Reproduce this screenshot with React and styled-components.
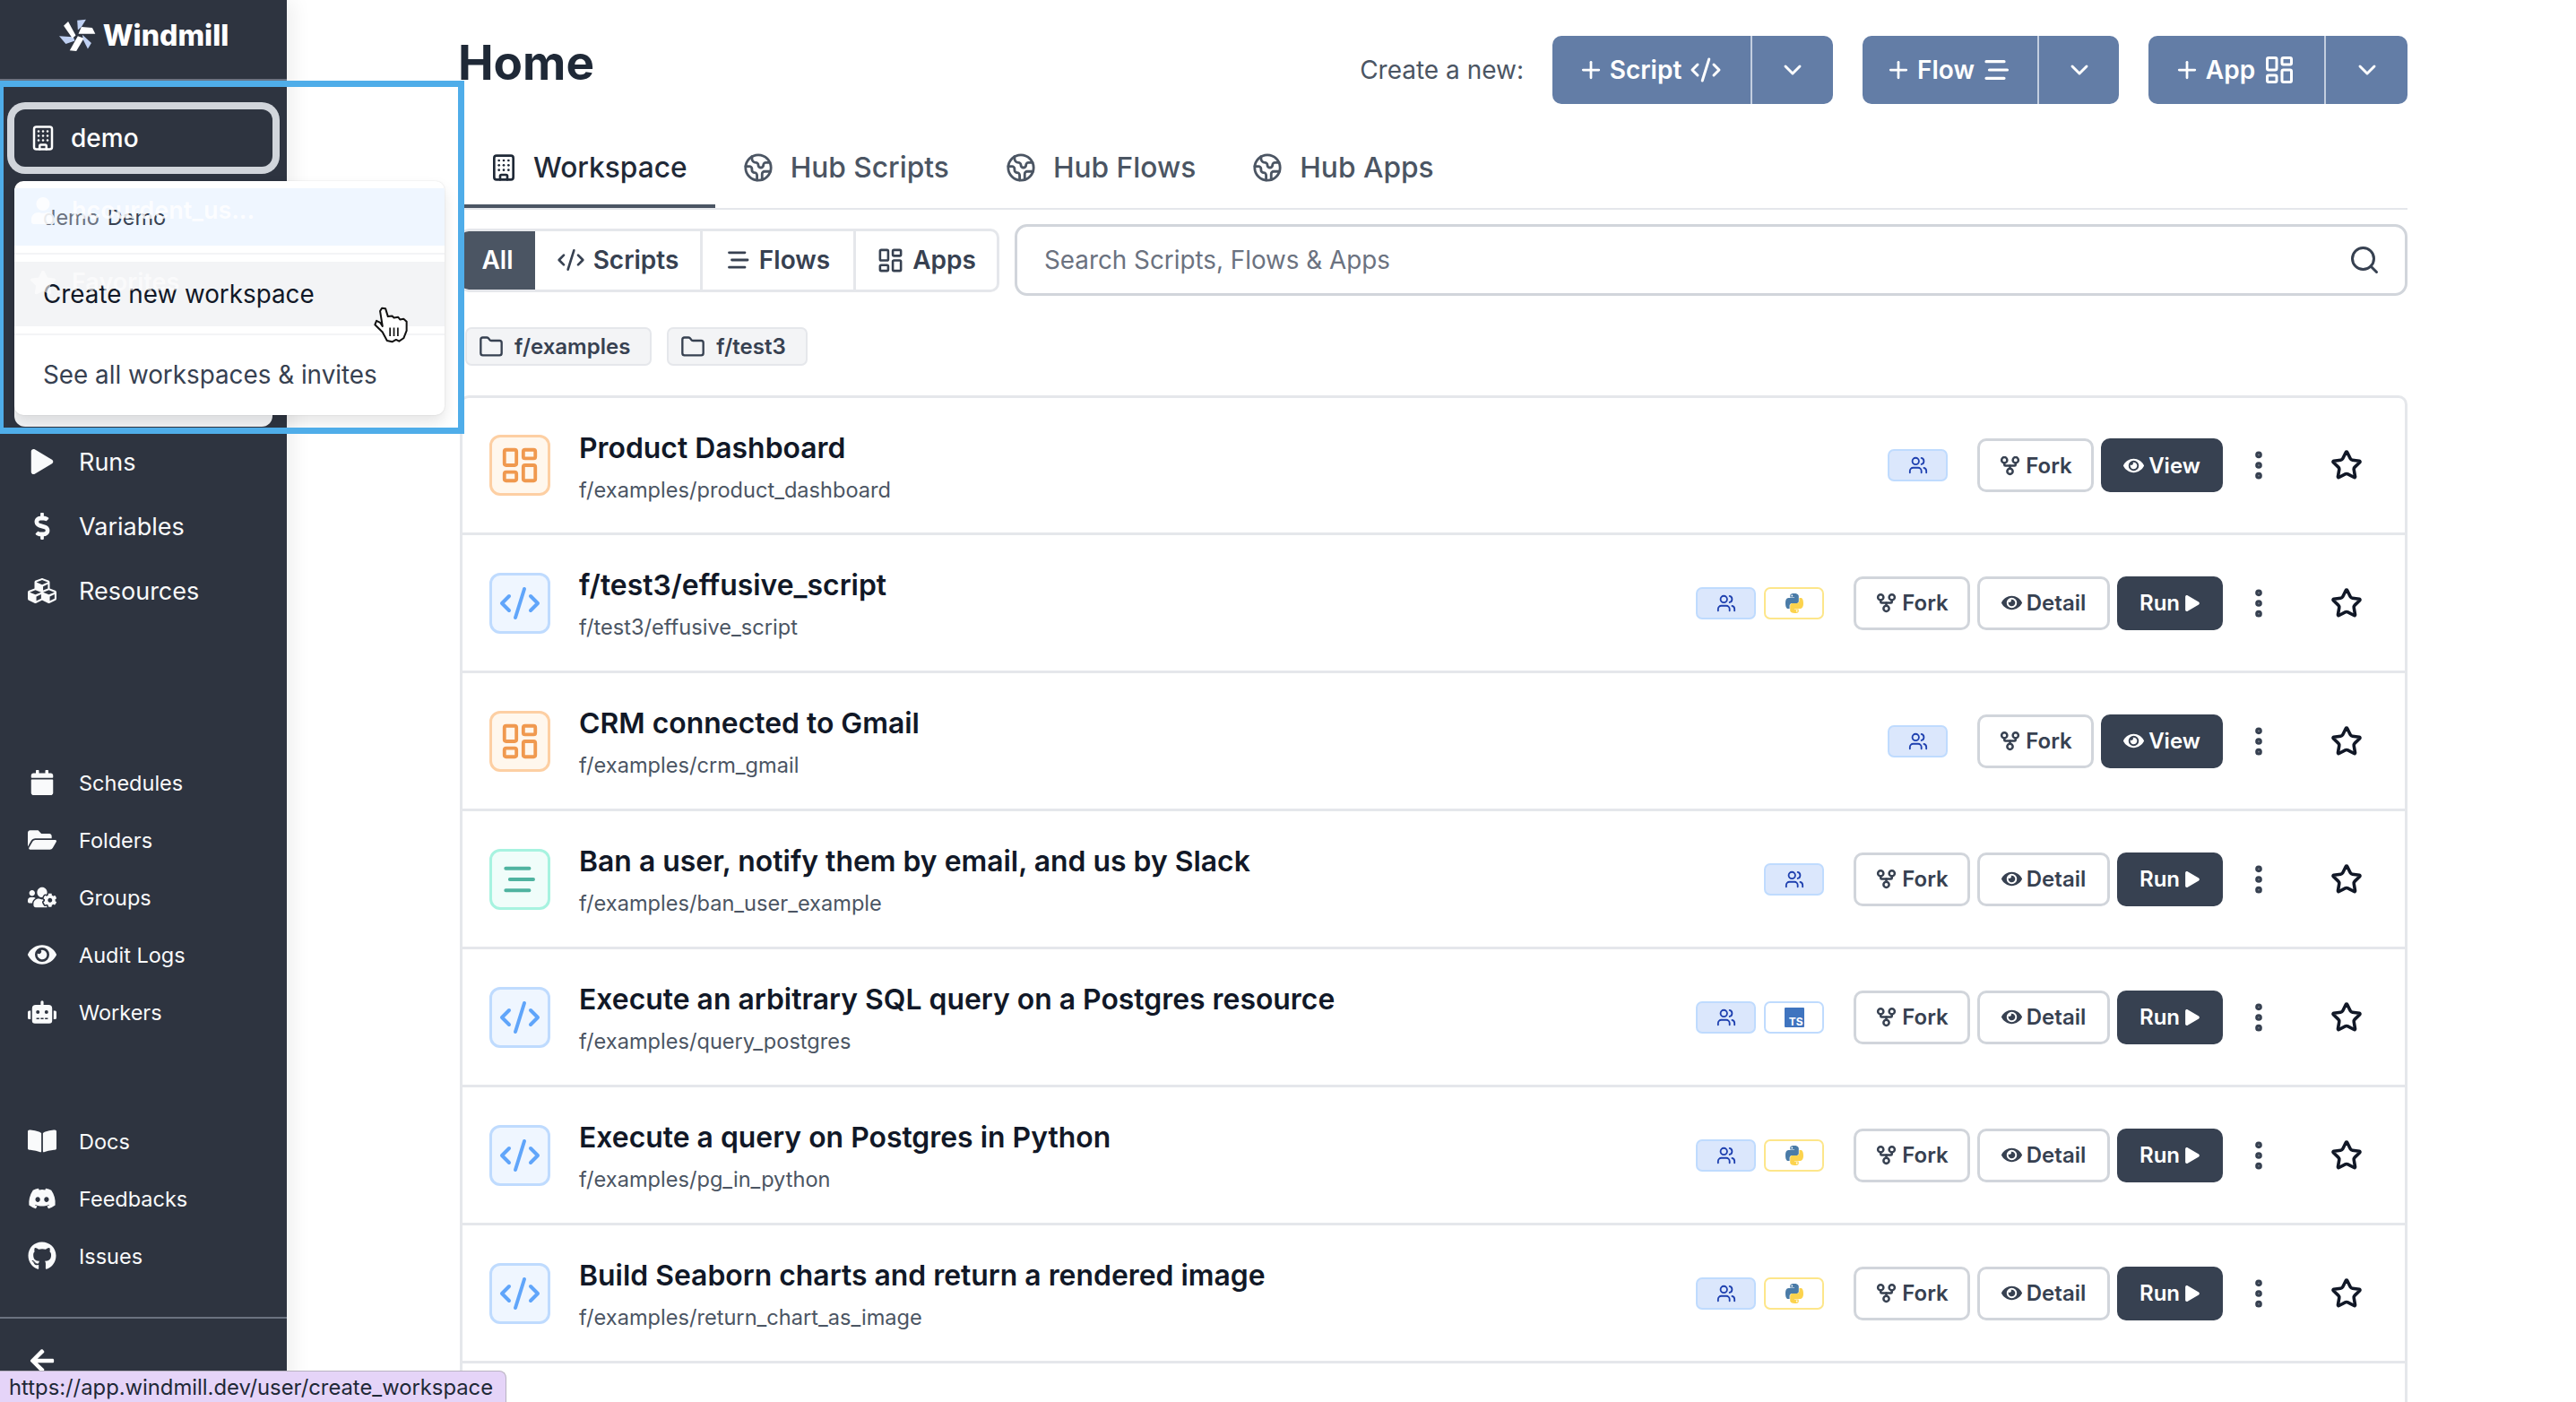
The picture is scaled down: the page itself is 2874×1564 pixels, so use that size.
import React from "react";
import styled, { createGlobalStyle } from "styled-components";
import {
  Building,
  ChevronDown,
  Code2,
  Earth,
  Folder,
  GitFork,
  LayoutDashboard,
  MoreVertical,
  Plus,
  Search,
  Star,
  Users,
} from "lucide-react";
import {
  FaArrowLeft,
  FaBookOpen,
  FaCalendar,
  FaCubes,
  FaDiscord,
  FaDollarSign,
  FaEye,
  FaFolderOpen,
  FaGithub,
  FaPlay,
  FaRobot,
  FaStar,
  FaUser,
  FaUsersCog,
} from "react-icons/fa";

const GlobalStyle = createGlobalStyle`
  html, body {
    margin: 0;
    height: 100%;
    overflow: hidden;
    background: #ffffff;
    font-family: Inter, "Liberation Sans", sans-serif;
  }
  * { box-sizing: border-box; }
`;

const Layout = styled.div`
  position: relative;
  display: flex;
  width: 2874px;
  height: 1564px;
  overflow: hidden;
`;

const Sidebar = styled.aside`
  flex: 0 0 320px;
  height: 100%;
  display: flex;
  flex-direction: column;
  background: #2e3440;
  color: #ffffff;
  box-shadow: 6px 0 22px rgba(0, 0, 0, 0.07);
`;

const Brand = styled.div`
  height: 90px;
  flex: none;
  display: flex;
  align-items: center;
  justify-content: center;
  gap: 8px;
  padding-bottom: 10px;
  border-bottom: 2px solid #6b7280;
  font-size: 32px;
  font-weight: 800;
`;

const SidebarBody = styled.div`
  flex: 1;
  padding: 32px 16px 0;
  display: flex;
  flex-direction: column;
`;

const WorkspaceButton = styled.div`
  height: 64px;
  flex: none;
  display: flex;
  align-items: center;
  gap: 16px;
  padding-left: 17px;
  border-radius: 12px;
  box-shadow: 0 0 0 8px #d1d5db;
  font-size: 28px;
  font-weight: 500;
  margin-bottom: 293px;
`;

const NavGroup = styled.nav`
  display: flex;
  flex-direction: column;
  margin-top: ${(p) => p.$top}px;
`;

const NavRow = styled.div`
  height: ${(p) => p.$height}px;
  display: flex;
  align-items: center;
  gap: 15px;
  font-size: ${(p) => p.$size}px;
  font-weight: 400;
  color: #f9fafb;
`;

const NavIcon = styled.span`
  width: 42px;
  margin-left: 10px;
  margin-right: 5px;
  display: flex;
  justify-content: center;
  align-items: center;
  flex: none;
`;

const SidebarFooter = styled.div`
  flex: none;
  height: 95px;
  border-top: 2px solid #6b7280;
  padding: 32px 0 0 32px;
`;

const Main = styled.main`
  flex: 1;
  min-width: 0;
  padding: 0 188px 0 193px;
  display: flex;
  flex-direction: column;
`;

const PageHeader = styled.header`
  height: 135px;
  flex: none;
  display: flex;
  justify-content: space-between;
  padding-top: 40px;
`;

const PageTitle = styled.h1`
  margin: -2px 0 0 -2px;
  font-size: 53px;
  line-height: 64px;
  font-weight: 700;
  color: #1f2937;
`;

const CreateBar = styled.div`
  display: flex;
  align-items: flex-start;
`;

const CreateLabel = styled.span`
  font-size: 28px;
  line-height: 76px;
  color: #4b5563;
  margin-right: 32px;
`;

const SplitButton = styled.div`
  height: 76px;
  display: flex;
  margin-left: ${(p) => p.$gap}px;
  background: #637da6;
  color: #ffffff;
  border-radius: 10px;
  font-size: 28px;
  font-weight: 600;
`;

const SplitMain = styled.div`
  width: ${(p) => p.$width}px;
  display: flex;
  align-items: center;
  justify-content: center;
  gap: 6px;
  padding-right: 4px;
  border-right: 2px solid #c3cedf;
  svg:last-child { margin-left: 3px; }
`;

const SplitArrow = styled.div`
  width: ${(p) => p.$width}px;
  display: flex;
  align-items: center;
  justify-content: center;
`;

const Tabs = styled.div`
  height: 99px;
  flex: none;
  display: flex;
  padding-left: 2px;
  border-bottom: 2px solid #e5e7eb;
`;

const Tab = styled.div`
  height: 97px;
  display: flex;
  align-items: center;
  gap: ${(p) => (p.$active ? 17 : 19)}px;
  padding: 10px 31px 0;
  font-size: 31.7px;
  font-weight: 500;
  color: ${(p) => (p.$active ? "#1f2937" : "#4b5563")};
  border-bottom: 4px solid ${(p) => (p.$active ? "#4b5563" : "transparent")};
  margin-right: ${(p) => (p.$active ? 0 : 1)}px;
`;

const FilterRow = styled.div`
  margin-top: 16px;
  height: 80px;
  flex: none;
  display: flex;
  align-items: center;
  gap: 17px;
`;

const FilterToggle = styled.div`
  width: 602px;
  height: 71px;
  display: flex;
  border: 3px solid #e5e7eb;
  border-left: 0;
  border-radius: 10px;
`;

const FilterOption = styled.div`
  flex: 0 0 ${(p) => p.$width}px;
  display: flex;
  align-items: center;
  justify-content: center;
  gap: 9px;
  font-size: 28px;
  font-weight: 600;
  color: ${(p) => (p.$active ? "#ffffff" : "#374151")};
  background: ${(p) => (p.$active ? "#4b5563" : "transparent")};
  border-right: ${(p) => (p.$active || p.$last ? "0" : "3px solid #e5e7eb")};
  border-radius: ${(p) => (p.$active ? "10px 0 0 10px" : "0")};
`;

const SearchBox = styled.div`
  flex: 1;
  height: 80px;
  display: flex;
  align-items: center;
  justify-content: space-between;
  padding: 0 27px 0 30px;
  border: 3px solid #d1d5db;
  border-radius: 14px;
  font-size: 27.8px;
  color: #6b7280;
`;

const FolderRow = styled.div`
  margin-top: 35px;
  height: 43px;
  flex: none;
  display: flex;
  gap: 17px;
  padding-left: 6px;
`;

const FolderChip = styled.div`
  display: flex;
  align-items: center;
  gap: 12px;
  padding: 0 22px 0 13px;
  background: #f3f4f6;
  border: 2px solid #e5e7eb;
  border-radius: 7px;
  font-size: 24px;
  font-weight: 600;
  color: #374151;
`;

const ItemList = styled.section`
  margin-top: 33px;
  flex: 1;
  border: 3px solid #e5e7eb;
  border-bottom: 0;
  border-radius: 10px 10px 0 0;
`;

const ItemRow = styled.article`
  height: 154px;
  display: flex;
  align-items: center;
  padding: 0 0 0 30px;
  border-bottom: 3px solid #e5e7eb;
  &:first-child { height: 153px; }
`;

const Tile = styled.div`
  width: 68px;
  height: 68px;
  flex: none;
  display: flex;
  align-items: center;
  justify-content: center;
  margin-right: 32px;
  border: 3px solid ${(p) => p.$border};
  border-radius: 12px;
  background: ${(p) => p.$bg};
  color: ${(p) => p.$color};
`;

const ItemText = styled.div`
  flex: 1;
  min-width: 0;
  display: flex;
  flex-direction: column;
  gap: 8px;
  margin-top: 3px;
`;

const ItemTitle = styled.div`
  font-size: 31.9px;
  line-height: 44px;
  font-weight: 600;
  color: #111827;
`;

const ItemPath = styled.div`
  font-size: 23.6px;
  line-height: 34px;
  color: #4b5563;
`;

const Badges = styled.div`
  display: flex;
  gap: 9px;
  margin-right: 33px;
`;

const Badge = styled.div`
  width: 67px;
  height: 36px;
  display: flex;
  align-items: center;
  justify-content: center;
  border: 2px solid ${(p) => p.$border};
  border-radius: 7px;
  background: ${(p) => p.$bg};
  color: #1e40af;
`;

const TsMark = styled.span`
  width: 22px;
  height: 22px;
  display: flex;
  align-items: flex-end;
  justify-content: flex-end;
  background: #3f74bf;
  border-radius: 1px;
  color: #ffffff;
  font-size: 12px;
  font-weight: 700;
  line-height: 12px;
  padding-right: 1px;
`;

const Actions = styled.div`
  display: flex;
  align-items: center;
  gap: 8px;
`;

const ActionButton = styled.div`
  width: ${(p) => p.$width}px;
  height: 60px;
  display: flex;
  align-items: center;
  justify-content: center;
  gap: 5px;
  border: ${(p) => (p.$dark ? "0" : "3px solid #d1d5db")};
  border-radius: 10px;
  background: ${(p) => (p.$dark ? "#374151" : "#ffffff")};
  color: ${(p) => (p.$dark ? "#ffffff" : "#374151")};
  font-size: 24px;
  font-weight: 600;
`;

const DotsBox = styled.div`
  width: 80px;
  display: flex;
  justify-content: center;
  color: #374151;
`;

const StarBox = styled.div`
  width: 123px;
  padding-right: 7px;
  display: flex;
  justify-content: center;
  color: #111827;
`;

/* the open workspace menu and what shows through it */
const HighlightFrame = styled.div`
  position: absolute;
  left: -3px;
  top: 90px;
  width: 521px;
  height: 394px;
  border: 7px solid #4fade9;
  pointer-events: none;
`;

const MenuBacking = styled.div`
  position: absolute;
  left: 16px;
  top: 440px;
  width: 288px;
  height: 36px;
  background: #f3f4f6;
  border-radius: 0 0 12px 12px;
`;

const Menu = styled.div`
  position: absolute;
  left: 16px;
  top: 202px;
  width: 480px;
  height: 261px;
  padding-top: 8px;
  background: #ffffff;
  border-radius: 10px;
  box-shadow: 0 8px 16px rgba(0, 0, 0, 0.1), 0 0 2px rgba(0, 0, 0, 0.12);
  overflow: hidden;
`;

const MenuItem = styled.div`
  height: ${(p) => p.$height}px;
  display: flex;
  align-items: center;
  gap: 9px;
  padding-left: 32px;
  font-size: ${(p) => p.$size || 27.8}px;
  color: ${(p) => p.$color};
  background: ${(p) => p.$bg || "transparent"};
`;

const MutedName = styled.span`
  color: #6b7280;
`;

const MenuDivider = styled.div`
  height: 2px;
  margin: 8px 0;
  background: #f3f4f6;
`;

const GhostRow = styled.div`
  position: absolute;
  left: 33px;
  top: ${(p) => p.$top}px;
  display: flex;
  align-items: center;
  gap: 17px;
  color: #ffffff;
  opacity: ${(p) => p.$opacity};
  font-size: 27px;
  font-weight: 600;
`;

const Cursor = styled.svg`
  position: absolute;
  left: 415px;
  top: 341px;
`;

const StatusBar = styled.div`
  position: absolute;
  left: 0;
  bottom: 0;
  width: 565px;
  height: 35px;
  display: flex;
  align-items: center;
  padding-left: 10px;
  background: #e5d4f8;
  border: 1px solid #b9b3c2;
  border-left: 0;
  border-bottom: 0;
  border-radius: 0 8px 0 0;
  color: #1f2937;
  font-size: 23.8px;
`;

const Logo = () => (
  <svg width="42" height="37" viewBox="45 35 125 110">
    <polygon points="108,40 137,37 122,62 110,72" fill="#bfd0f2" />
    <polygon points="122,62 158,65 168,85 112,85" fill="#ffffff" />
    <polygon points="125,88 155,115 143,135 128,105" fill="#bfd0f2" />
    <polygon points="110,92 130,100 105,142 83,140" fill="#ffffff" />
    <polygon points="48,92 95,95 100,108 70,118" fill="#bfd0f2" />
    <polygon points="63,58 78,44 103,90 92,100" fill="#ffffff" />
  </svg>
);

const PythonIcon = () => (
  <svg width="24" height="24" viewBox="0 0 24 24">
    <path
      d="M11.9 1C7 1 7.3 3.1 7.3 3.1v2.3h4.7V6H5.3S2 5.700 2 11.900c0 6.200 2.900 6 2.900 6h1.700v-2.900s-.1-2.900 2.800-2.900h4.700s2.700 0 2.700-2.700V3.900S16.700 1 11.900 1zM9.300 2.600a.9.9 0 1 1 0 1.800.9.9 0 0 1 0-1.800z"
      fill="#4a7ba7"
    />
    <path
      d="M12.100 23c4.900 0 4.600-2.100 4.600-2.100v-2.300H12V18h6.700s3.300.3 3.300-5.900c0-6.200-2.900-6-2.900-6h-1.700V9s.1 2.900-2.800 2.900H9.900s-2.700 0-2.700 2.700v5.500S7.300 23 12.100 23zm2.600-1.600a.9.9 0 1 1 0-1.800.9.9 0 0 1 0 1.800z"
      fill="#fcd34d"
    />
  </svg>
);

const FlowBars = ({ size = 24, stroke = 2.4 }) => (
  <svg width={size} height={size} viewBox="0 0 24 24" fill="none" stroke="currentColor" strokeWidth={stroke} strokeLinecap="round">
    <path d="M3 5h15M5.600 12h15M3 19h15" />
  </svg>
);

const tiles = {
  app: { $bg: "#fff7ed", $border: "#fdcfa3", $color: "#f0994f", icon: <LayoutDashboard size={46} strokeWidth={2} /> },
  script: { $bg: "#eff6ff", $border: "#bfdbfe", $color: "#60a5fa", icon: <Code2 size={48} strokeWidth={2} /> },
  flow: { $bg: "#f0fdfa", $border: "#a7f3e0", $color: "#4fb3a0", icon: <FlowBars size={42} stroke={2.2} /> },
};

const items = [
  { kind: "app", title: "Product Dashboard", path: "f/examples/product_dashboard" },
  { kind: "script", title: "f/test3/effusive_script", path: "f/test3/effusive_script", lang: "python" },
  { kind: "app", title: "CRM connected to Gmail", path: "f/examples/crm_gmail" },
  { kind: "flow", title: "Ban a user, notify them by email, and us by Slack", path: "f/examples/ban_user_example" },
  { kind: "script", title: "Execute an arbitrary SQL query on a Postgres resource", path: "f/examples/query_postgres", lang: "ts" },
  { kind: "script", title: "Execute a query on Postgres in Python", path: "f/examples/pg_in_python", lang: "python" },
  { kind: "script", title: "Build Seaborn charts and return a rendered image", path: "f/examples/return_chart_as_image", lang: "python" },
];

const mainNav = [
  ["Runs", <FaPlay size={28} />],
  ["Variables", <FaDollarSign size={30} />],
  ["Resources", <FaCubes size={32} />],
];

const settingsNav = [
  ["Schedules", <FaCalendar size={28} />],
  ["Folders", <FaFolderOpen size={32} />],
  ["Groups", <FaUsersCog size={32} />],
  ["Audit Logs", <FaEye size={32} />],
  ["Workers", <FaRobot size={32} />],
];

const helpNav = [
  ["Docs", <FaBookOpen size={32} />],
  ["Feedbacks", <FaDiscord size={32} />],
  ["Issues", <FaGithub size={32} />],
];

const NavList = ({ rows, top, height, size }) => (
  <NavGroup $top={top}>
    {rows.map(([label, icon]) => (
      <NavRow key={label} $height={height} $size={size}>
        <NavIcon>{icon}</NavIcon>
        {label}
      </NavRow>
    ))}
  </NavGroup>
);

const Row = ({ item }) => {
  const tile = tiles[item.kind];
  const isApp = item.kind === "app";
  return (
    <ItemRow>
      <Tile $bg={tile.$bg} $border={tile.$border} $color={tile.$color}>
        {tile.icon}
      </Tile>
      <ItemText>
        <ItemTitle>{item.title}</ItemTitle>
        <ItemPath>{item.path}</ItemPath>
      </ItemText>
      <Badges>
        <Badge $bg="#dbe7fc" $border="#bfdbfe">
          <Users size={22} strokeWidth={2} />
        </Badge>
        {item.lang === "python" && (
          <Badge $bg="#ffffff" $border="#fde68a">
            <PythonIcon />
          </Badge>
        )}
        {item.lang === "ts" && (
          <Badge $bg="#ffffff" $border="#bfdbfe">
            <TsMark>TS</TsMark>
          </Badge>
        )}
      </Badges>
      <Actions>
        <ActionButton $width={130}>
          <GitFork size={25} strokeWidth={2.4} />
          Fork
        </ActionButton>
        {isApp ? (
          <ActionButton $width={136} $dark>
            <FaEye size={23} />
            View
          </ActionButton>
        ) : (
          <>
            <ActionButton $width={148}>
              <FaEye size={23} />
              Detail
            </ActionButton>
            <ActionButton $width={118} $dark>
              Run
              <FaPlay size={18} />
            </ActionButton>
          </>
        )}
      </Actions>
      <DotsBox>
        <MoreVertical size={40} strokeWidth={2.6} />
      </DotsBox>
      <StarBox>
        <Star size={36} strokeWidth={2.4} />
      </StarBox>
    </ItemRow>
  );
};

export default function App() {
  return (
    <>
      <GlobalStyle />
      <Layout>
        <Sidebar>
          <Brand>
            <Logo />
            Windmill
          </Brand>
          <SidebarBody>
            <WorkspaceButton>
              <Building size={30} strokeWidth={2} />
              demo
            </WorkspaceButton>
            <NavList rows={mainNav} top={0} height={72} size={27} />
            <NavList rows={settingsNav} top={146} height={64} size={23.5} />
            <NavList rows={helpNav} top={80} height={64} size={23.5} />
          </SidebarBody>
          <SidebarFooter>
            <FaArrowLeft size={30} />
          </SidebarFooter>
        </Sidebar>
        <Main>
          <PageHeader>
            <PageTitle>Home</PageTitle>
            <CreateBar>
              <CreateLabel>Create a new:</CreateLabel>
              <SplitButton $gap={0}>
                <SplitMain $width={223}>
                  <Plus size={30} strokeWidth={2.2} />
                  Script
                  <Code2 size={36} strokeWidth={2} />
                </SplitMain>
                <SplitArrow $width={90}>
                  <ChevronDown size={32} strokeWidth={2.2} />
                </SplitArrow>
              </SplitButton>
              <SplitButton $gap={33}>
                <SplitMain $width={197}>
                  <Plus size={30} strokeWidth={2.2} />
                  Flow
                  <FlowBars size={32} />
                </SplitMain>
                <SplitArrow $width={89}>
                  <ChevronDown size={32} strokeWidth={2.2} />
                </SplitArrow>
              </SplitButton>
              <SplitButton $gap={33}>
                <SplitMain $width={198}>
                  <Plus size={30} strokeWidth={2.2} />
                  App
                  <LayoutDashboard size={36} strokeWidth={2} />
                </SplitMain>
                <SplitArrow $width={91}>
                  <ChevronDown size={32} strokeWidth={2.2} />
                </SplitArrow>
              </SplitButton>
            </CreateBar>
          </PageHeader>
          <Tabs>
            <Tab $active>
              <Building size={32} strokeWidth={2} />
              Workspace
            </Tab>
            <Tab>
              <Earth size={34} strokeWidth={2} />
              Hub Scripts
            </Tab>
            <Tab>
              <Earth size={34} strokeWidth={2} />
              Hub Flows
            </Tab>
            <Tab>
              <Earth size={34} strokeWidth={2} />
              Hub Apps
            </Tab>
          </Tabs>
          <FilterRow>
            <FilterToggle>
              <FilterOption $active $width={84}>All</FilterOption>
              <FilterOption $width={187}>
                <Code2 size={32} strokeWidth={2} />
                Scripts
              </FilterOption>
              <FilterOption $width={171}>
                <FlowBars size={28} />
                Flows
              </FilterOption>
              <FilterOption $width={157} $last>
                <LayoutDashboard size={31} strokeWidth={2} />
                Apps
              </FilterOption>
            </FilterToggle>
            <SearchBox>
              Search Scripts, Flows &amp; Apps
              <Search size={36} strokeWidth={2} color="#374151" />
            </SearchBox>
          </FilterRow>
          <FolderRow>
            <FolderChip>
              <Folder size={28} strokeWidth={2} />
              f/examples
            </FolderChip>
            <FolderChip>
              <Folder size={28} strokeWidth={2} />
              f/test3
            </FolderChip>
          </FolderRow>
          <ItemList>
            {items.map((item) => (
              <Row key={item.path} item={item} />
            ))}
          </ItemList>
        </Main>
        <MenuBacking />
        <Menu>
          <MenuItem $height={64} $bg="#eff6ff" $color="#374151" $size={23.5}>
            <MutedName>demo</MutedName>
            Demo
          </MenuItem>
          <MenuDivider />
          <MenuItem $height={72} $bg="#f3f4f6" $color="#111827">Create new workspace</MenuItem>
          <MenuDivider />
          <MenuItem $height={72} $color="#374151">See all workspaces &amp; invites</MenuItem>
        </Menu>
        <GhostRow $top={218} $opacity={0.85}>
          <FaUser size={30} />
          hcourdent_us...
        </GhostRow>
        <GhostRow $top={298} $opacity={0.6}>
          <FaStar size={30} />
          Favorites
        </GhostRow>
        <Cursor width="42" height="43" viewBox="45 32 125 128">
          <path
            d="M78 40 L90 42 L98 68 L112 66 L118 72 L132 70 L138 78 L150 76 L160 85 L160 115 L150 140 L135 150 L125 145 L112 152 L95 148 L80 120 L55 95 L60 82 L72 88 L80 100 L72 50 Z"
            fill="#ffffff"
            stroke="#111111"
            strokeWidth="6"
            strokeLinejoin="round"
          />
          <path d="M105 105v28M118 105v28M131 105v28" stroke="#111111" strokeWidth="5" />
        </Cursor>
        <HighlightFrame />
        <StatusBar>https://app.windmill.dev/user/create_workspace</StatusBar>
      </Layout>
    </>
  );
}
